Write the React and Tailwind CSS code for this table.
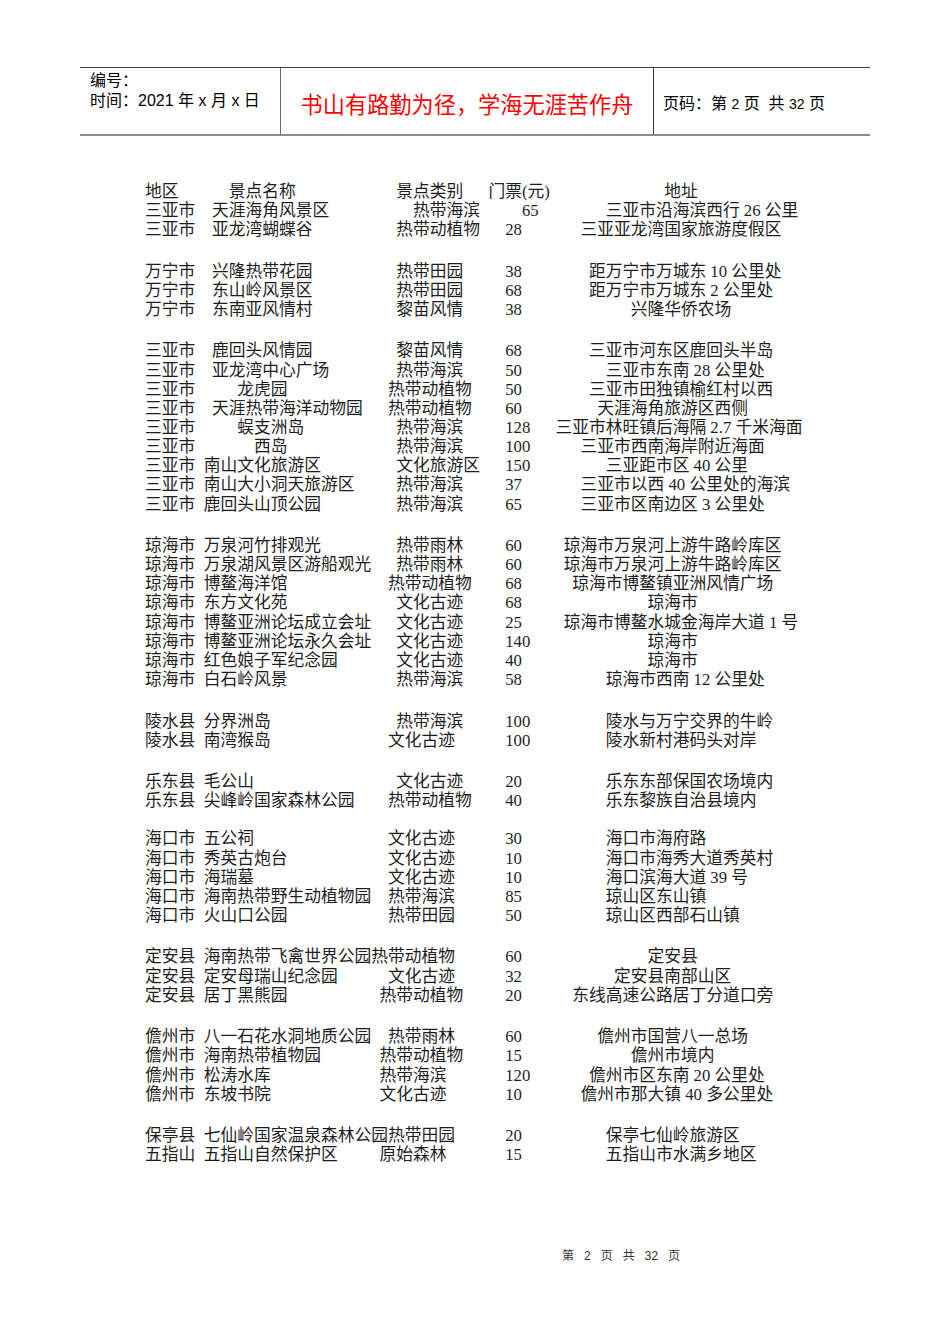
import React from 'react';

// [region, name, nameUnit, type, typeUnit, price, priceUnit, address, addressUnit]
// units are half-em steps measured from the left edge of the table
const ITEMS = [
  ['地区', '景点名称', 10, '景点类别', 30, '门票(元)', 41, '地址', 62],
  ['三亚市', '天涯海角风景区', 8, '热带海滨', 32, '65', 45, '三亚市沿海滨西行 26 公里', 55],
  ['三亚市', '亚龙湾蝴蝶谷', 8, '热带动植物', 30, '28', 43, '三亚亚龙湾国家旅游度假区', 52],
  { blank: 22.35 },
  ['万宁市', '兴隆热带花园', 8, '热带田园', 30, '38', 43, '距万宁市万城东 10 公里处', 53],
  ['万宁市', '东山岭风景区', 8, '热带田园', 30, '68', 43, '距万宁市万城东 2 公里处', 53],
  ['万宁市', '东南亚风情村', 8, '黎苗风情', 30, '38', 43, '兴隆华侨农场', 58],
  { blank: 22.35 },
  ['三亚市', '鹿回头风情园', 8, '黎苗风情', 30, '68', 43, '三亚市河东区鹿回头半岛', 53],
  ['三亚市', '亚龙湾中心广场', 8, '热带海滨', 30, '50', 43, '三亚市东南 28 公里处', 55],
  ['三亚市', '龙虎园', 11, '热带动植物', 29, '50', 43, '三亚市田独镇榆红村以西', 53],
  ['三亚市', '天涯热带海洋动物园', 8, '热带动植物', 29, '60', 43, '天涯海角旅游区西侧', 54],
  ['三亚市', '蜈支洲岛', 11, '热带海滨', 30, '128', 43, '三亚市林旺镇后海隔 2.7 千米海面', 49],
  ['三亚市', '西岛', 13, '热带海滨', 30, '100', 43, '三亚市西南海岸附近海面', 52],
  ['三亚市', '南山文化旅游区', 7, '文化旅游区', 30, '150', 43, '三亚距市区 40 公里', 55],
  ['三亚市', '南山大小洞天旅游区', 7, '热带海滨', 30, '37', 43, '三亚市以西 40 公里处的海滨', 52],
  ['三亚市', '鹿回头山顶公园', 7, '热带海滨', 30, '65', 43, '三亚市区南边区 3 公里处', 52],
  { blank: 22.35 },
  ['琼海市', '万泉河竹排观光', 7, '热带雨林', 30, '60', 43, '琼海市万泉河上游牛路岭库区', 50],
  ['琼海市', '万泉湖风景区游船观光', 7, '热带雨林', 30, '60', 43, '琼海市万泉河上游牛路岭库区', 50],
  ['琼海市', '博鳌海洋馆', 7, '热带动植物', 29, '68', 43, '琼海市博鳌镇亚洲风情广场', 51],
  ['琼海市', '东方文化苑', 7, '文化古迹', 30, '68', 43, '琼海市', 60],
  ['琼海市', '博鳌亚洲论坛成立会址', 7, '文化古迹', 30, '25', 43, '琼海市博鳌水城金海岸大道 1 号', 50],
  ['琼海市', '博鳌亚洲论坛永久会址', 7, '文化古迹', 30, '140', 43, '琼海市', 60],
  ['琼海市', '红色娘子军纪念园', 7, '文化古迹', 30, '40', 43, '琼海市', 60],
  ['琼海市', '白石岭风景', 7, '热带海滨', 30, '58', 43, '琼海市西南 12 公里处', 55],
  { blank: 22.35 },
  ['陵水县', '分界洲岛', 7, '热带海滨', 30, '100', 43, '陵水与万宁交界的牛岭', 55],
  ['陵水县', '南湾猴岛', 7, '文化古迹', 29, '100', 43, '陵水新村港码头对岸', 55],
  { blank: 22.35 },
  ['乐东县', '毛公山', 7, '文化古迹', 30, '20', 43, '乐东东部保国农场境内', 55],
  ['乐东县', '尖峰岭国家森林公园', 7, '热带动植物', 29, '40', 43, '乐东黎族自治县境内', 55],
  { blank: 19 },
  ['海口市', '五公祠', 7, '文化古迹', 29, '30', 43, '海口市海府路', 55],
  ['海口市', '秀英古炮台', 7, '文化古迹', 29, '10', 43, '海口市海秀大道秀英村', 55],
  ['海口市', '海瑞墓', 7, '文化古迹', 29, '10', 43, '海口滨海大道 39 号', 55],
  ['海口市', '海南热带野生动植物园', 7, '热带海滨', 29, '85', 43, '琼山区东山镇', 55],
  ['海口市', '火山口公园', 7, '热带田园', 29, '50', 43, '琼山区西部石山镇', 55],
  { blank: 22.35 },
  ['定安县', '海南热带飞禽世界公园', 7, '热带动植物', 27, '60', 43, '定安县', 60],
  ['定安县', '定安母瑞山纪念园', 7, '文化古迹', 29, '32', 43, '定安县南部山区', 56],
  ['定安县', '居丁黑熊园', 7, '热带动植物', 28, '20', 43, '东线高速公路居丁分道口旁', 51],
  { blank: 22.35 },
  ['儋州市', '八一石花水洞地质公园', 7, '热带雨林', 29, '60', 43, '儋州市国营八一总场', 54],
  ['儋州市', '海南热带植物园', 7, '热带动植物', 28, '15', 43, '儋州市境内', 58],
  ['儋州市', '松涛水库', 7, '热带海滨', 28, '120', 43, '儋州市区东南 20 公里处', 53],
  ['儋州市', '东坡书院', 7, '文化古迹', 28, '10', 43, '儋州市那大镇 40 多公里处', 52],
  { blank: 22.35 },
  ['保亭县', '七仙岭国家温泉森林公园', 7, '热带田园', 29, '20', 43, '保亭七仙岭旅游区', 55],
  ['五指山', '五指山自然保护区', 7, '原始森林', 28, '15', 43, '五指山市水满乡地区', 55],
];

function Row({ r }) {
  const [region, name, nu, type, tu, price, pu, addr, au] = r;
  return (
    <div className="flex h-[19.15px] leading-[19.15px] whitespace-pre">
      <div className="w-[3.5em] shrink-0">{region}</div>
      <div className="w-[10em] shrink-0" style={{ paddingLeft: `${(nu - 7) / 2}em` }}>
        {name}
      </div>
      <div className="w-[7em] shrink-0" style={{ paddingLeft: `${(tu - 27) / 2}em` }}>
        {type}
      </div>
      <div className="w-[4em] shrink-0" style={{ paddingLeft: `${(pu - 41) / 2}em` }}>
        {price}
      </div>
      <div className="shrink-0" style={{ paddingLeft: `${(au - 49) / 2}em` }}>
        {addr}
      </div>
    </div>
  );
}

export default function App() {
  return (
    <div className="min-h-[1344px] w-[950px] bg-white text-black overflow-hidden">
      {/* Header band */}
      <div className="ml-[80px] mt-[67px] flex h-[69px] w-[790px] border-t border-t-[#3a3a3a] border-b-2 border-b-[#8c8c8c] font-['Liberation_Sans','Noto_Sans_CJK_SC',sans-serif]">
        <div className="w-[201px] shrink-0 border-r border-r-[#6b6b6b] pl-[10px] pt-[3px] text-[16px] leading-[20px]">
          <div>编号：</div>
          <div>时间：2021 年 x 月 x 日</div>
        </div>
        <div className="flex w-[373px] shrink-0 items-center justify-center border-r border-r-[#3a3a3a] pt-[9px] text-[22.2px] leading-[28px] text-[#ff0000]">
          书山有路勤为径，学海无涯苦作舟
        </div>
        <div className="flex flex-1 items-center pl-[9px] pt-[5px] text-[16px] leading-[20px]">
          <span className="whitespace-pre">
            页码：第 <span className="text-[14px]">2</span> 页  共 <span className="text-[14px]">32</span> 页
          </span>
        </div>
      </div>

      {/* Table body */}
      <div className="mt-[45.9px] pl-[145px] text-[16.75px] text-[#1e1e1e] font-['Liberation_Serif','Noto_Sans_CJK_SC',serif]">
        {ITEMS.map((it, i) =>
          Array.isArray(it) ? (
            <Row key={i} r={it} />
          ) : (
            <div key={i} style={{ height: `${it.blank}px` }} />
          )
        )}
      </div>

      {/* Footer */}
      <div className="mt-[84px] flex gap-[10px] pl-[562px] text-[12px] leading-[16px] text-[#333] font-['Liberation_Sans','Noto_Sans_CJK_SC',sans-serif]">
        <span>第</span>
        <span>2</span>
        <span>页</span>
        <span>共</span>
        <span>32</span>
        <span>页</span>
      </div>
    </div>
  );
}
